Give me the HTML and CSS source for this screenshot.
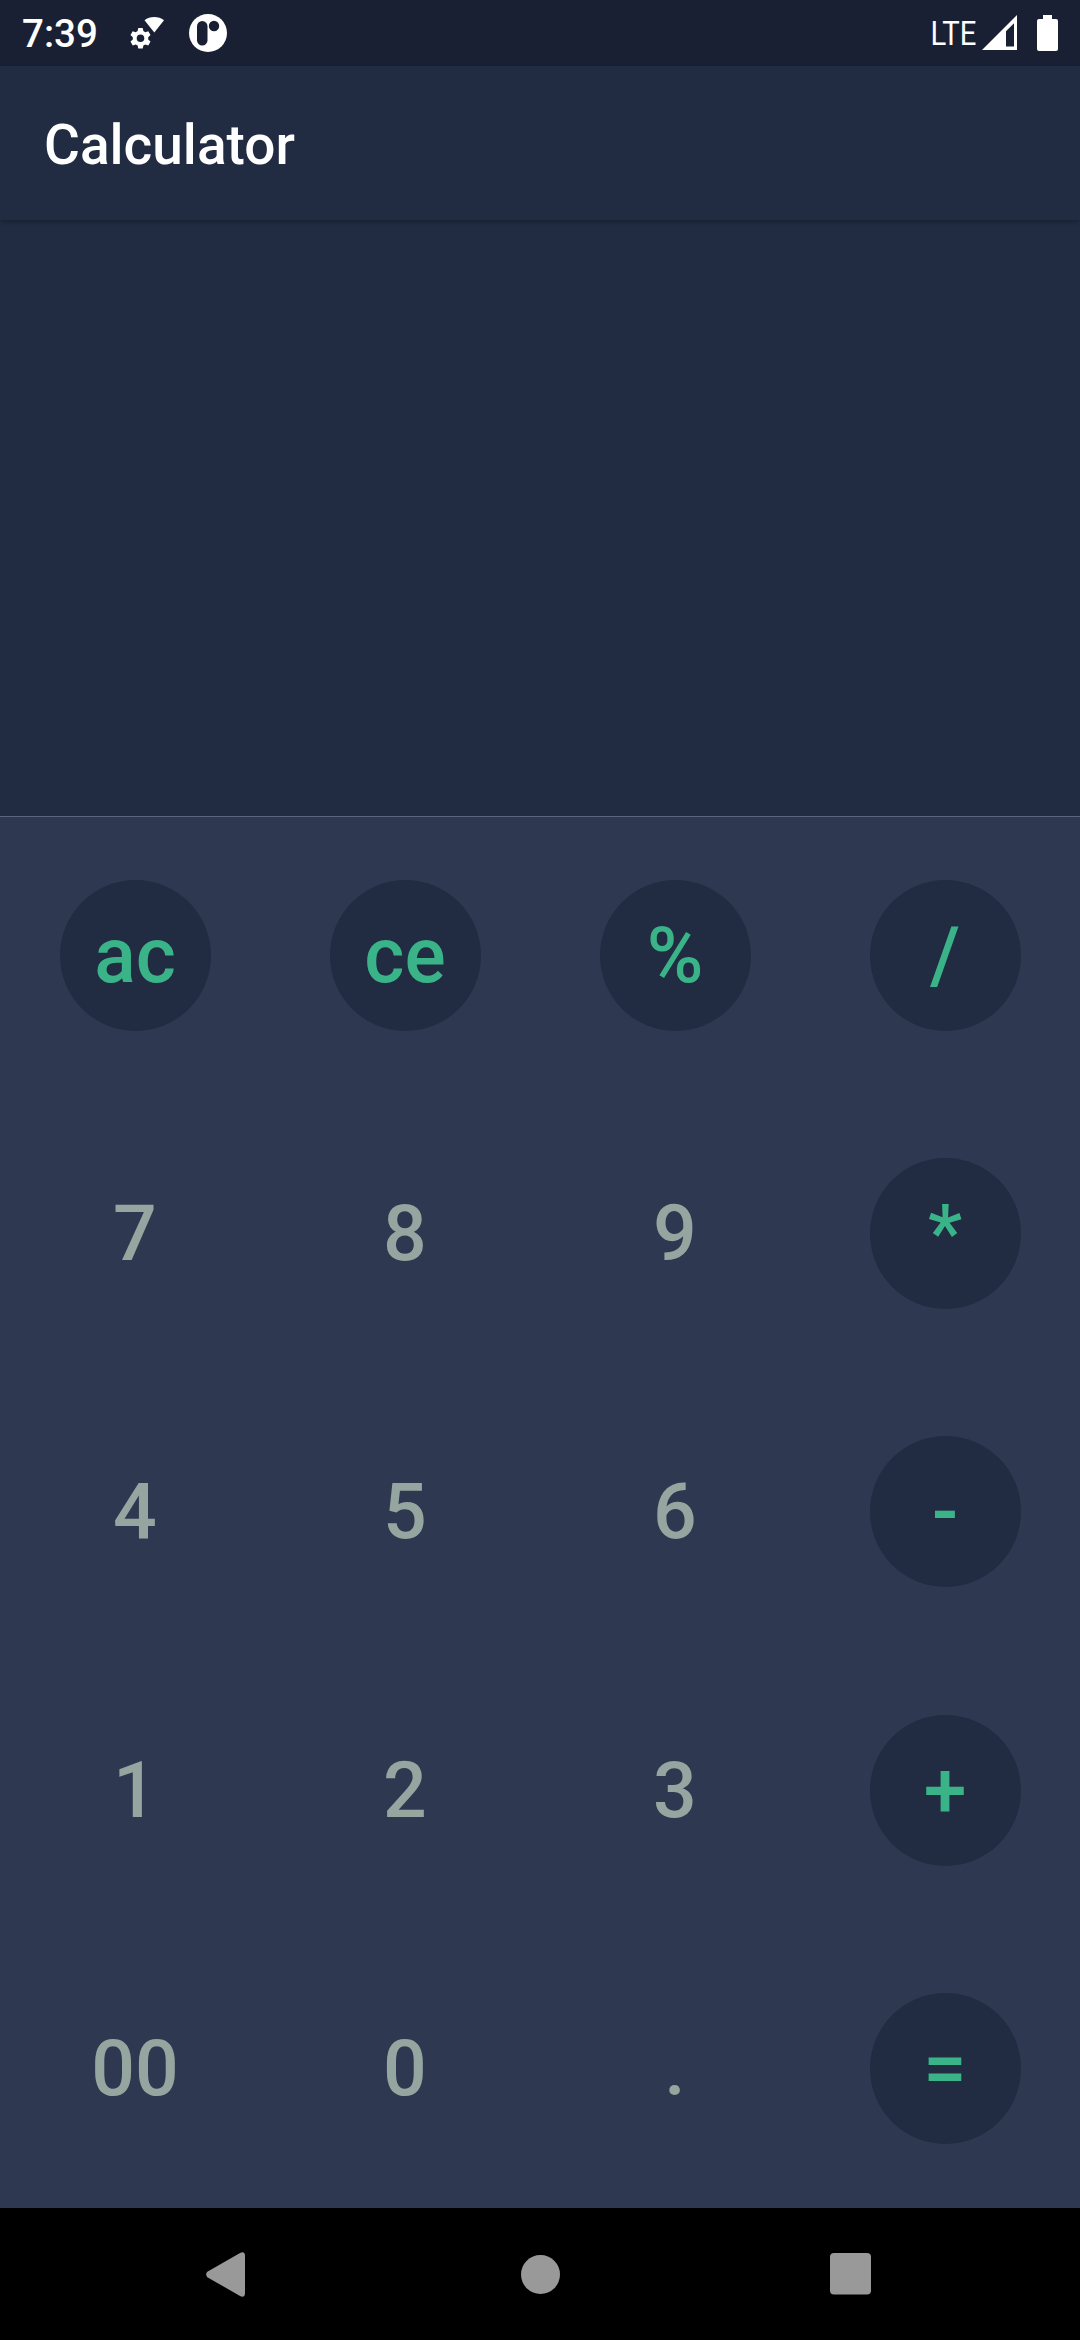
FILE: index.html
```html
<!DOCTYPE html>
<html lang="en">
<head>
<meta charset="utf-8">
<title>Calculator</title>
<link rel="stylesheet" href="styles.css">
</head>
<body>
<div class="screen">
  <header class="status">
    <span class="clock">7:39</span>
    <svg class="status-icon gear" width="36" height="36" viewBox="0 0 36 36" fill="#fff">
      <path d="M14.5 5.200C20 1 28.500 1 34 5.200L24.300 17.500Z"/>
      <path fill-rule="evenodd" d="M8.300 13h4.400l.7 3.100 1.900 1.100 3-1 2.200 3.900-2.300 2.100v2.200l2.300 2.100-2.200 3.900-3-1-1.900 1.100-.7 3.100H8.300l-.7-3.100-1.900-1.100-3 1L.5 26.500l2.300-2.100v-2.200L.5 20.100l2.200-3.900 3 1 1.900-1.100ZM10.500 19.500a3.800 3.800 0 1 0 0 7.600 3.800 3.800 0 1 0 0-7.600Z"/>
    </svg>
    <svg class="status-icon" width="38" height="38" viewBox="0 0 38 38">
      <circle cx="19" cy="19" r="19" fill="#fff"/>
      <rect class="cut" x="8" y="7" width="10.500" height="24.500" rx="5.200"/>
      <circle class="cut" cx="25" cy="12" r="5.200"/>
    </svg>
    <span class="network">LTE</span>
    <svg class="signal" width="35" height="35" viewBox="0 0 35 35">
      <path fill="#fff" fill-rule="evenodd" d="M35 0V35H0ZM32 8.200L24 16.200V31.500H32Z"/>
    </svg>
    <svg class="battery" width="21" height="36" viewBox="0 0 21 36" fill="#fff">
      <path d="M6 0h9v4h4a2 2 0 0 1 2 2v28a2 2 0 0 1-2 2H2a2 2 0 0 1-2-2V6a2 2 0 0 1 2-2h4Z"/>
    </svg>
  </header>
  <h1 class="appbar">Calculator</h1>
  <main class="display"></main>
  <section class="keypad">
    <button class="key op">ac</button>
    <button class="key op">ce</button>
    <button class="key op">%</button>
    <button class="key op">/</button>
    <button class="key">7</button>
    <button class="key">8</button>
    <button class="key">9</button>
    <button class="key op">*</button>
    <button class="key">4</button>
    <button class="key">5</button>
    <button class="key">6</button>
    <button class="key op">-</button>
    <button class="key">1</button>
    <button class="key">2</button>
    <button class="key">3</button>
    <button class="key op">+</button>
    <button class="key">00</button>
    <button class="key">0</button>
    <button class="key">.</button>
    <button class="key op">=</button>
  </section>
  <nav class="navbar">
    <svg width="40" height="45" viewBox="0 0 40 45" fill="#999"><path d="M1.300 19.800L34.500.8Q39 -1 39 4V41Q39 46 34.500 44.200L1.300 25.200Q-1 22.500 1.300 19.800Z"/></svg>
    <svg class="home" width="39" height="39" viewBox="0 0 39 39" fill="#999"><circle cx="19.500" cy="19.500" r="19.500"/></svg>
    <svg width="41" height="42" viewBox="0 0 41 42" fill="#999"><rect width="41" height="41.500" rx="4"/></svg>
  </nav>
</div>
</body>
</html>
```

FILE: styles.css
```css
* {
  box-sizing: border-box;
}

body {
  margin: 0;
  background: #000;
  font-family: Roboto, sans-serif;
}

.screen {
  display: flex;
  flex-direction: column;
  width: 1080px;
  height: 2340px;
  background: #212b42;
}

.status {
  display: flex;
  align-items: center;
  height: 66px;
  padding: 0 22px;
  background: #1a2033;
  color: #fff;
}

.clock {
  width: 108px;
  font-size: 38.5px;
  font-weight: 500;
  line-height: 66px;
  padding-top: 2px;
}

.status-icon {
  margin-right: 23px;
}

.cut {
  fill: #1a2033;
}

.network {
  margin-left: auto;
  font-size: 34px;
  line-height: 62px;
  transform: scaleX(0.86);
  transform-origin: right;
}

.signal {
  margin: 0 20px 1px 6px;
}

.battery {
  margin-bottom: 1px;
}

.appbar {
  z-index: 1;
  height: 154px;
  margin: 0;
  padding: 2px 44px 0;
  background: #212b42;
  box-shadow: 0 2px 4px rgba(0, 0, 0, 0.25);
  color: #fff;
  font-size: 55px;
  font-weight: 500;
  line-height: 154px;
}

.display {
  flex: 1;
  border-bottom: 1px solid #5c657a;
}

.keypad {
  display: grid;
  grid-template-columns: repeat(4, 1fr);
  grid-template-rows: repeat(5, 1fr);
  place-items: center;
  height: 1391px;
  background: #2e3850;
}

.key {
  width: 151px;
  height: 151px;
  margin-bottom: 1px;
  padding: 1px 0 0;
  border: 0;
  border-radius: 50%;
  background: none;
  color: #95a59f;
  font: 500 77px/150px Roboto, sans-serif;
}

.op {
  background: #212b42;
  color: #39b387;
}

.navbar {
  display: flex;
  align-items: center;
  justify-content: space-between;
  height: 132px;
  padding: 0 209px 0 206px;
  background: #000;
}

.home {
  margin-left: 5px;
}
```
